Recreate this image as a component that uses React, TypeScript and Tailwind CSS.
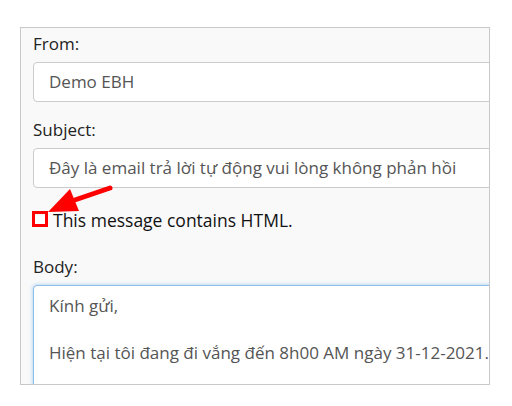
export default function App() {
  const font = { fontFamily: '"Open Sans", "Noto Sans", sans-serif' };
  return (
    <div className="relative w-[512px] h-[406px] bg-white pt-[27px] pl-[20px]" style={font}>
      <div className="w-[470px] h-[358px] border border-[#c8c8c8] bg-[#f9f9f9] overflow-hidden pl-[12px]">
        <div className="h-[22px] mt-[5px] text-[17px] leading-[22px] text-[#222]">From:</div>
        <div className="mt-[7px] w-[480px] h-[40px] rounded-[4px] border border-[#cccccc] bg-white pl-[15px] flex items-center text-[17px] text-[#555]">
          Demo EBH
        </div>
        <div className="h-[22px] mt-[17px] text-[17px] leading-[22px] text-[#222]">Subject:</div>
        <div className="mt-[7px] w-[480px] h-[40px] rounded-[4px] border border-[#cccccc] bg-white pl-[15px] flex items-center text-[17px] text-[#555]">
          Đây là email trả lời tự động vui lòng không phản hồi
        </div>
        <div className="mt-[22px] ml-[-1px] flex items-center h-[17px]">
          <div className="w-[16px] h-[16px] border-[3px] border-[#ff0000] bg-white shrink-0" />
          <span className="ml-[5px] mt-[3px] text-[17.5px] leading-[22px] text-[#111]">This message contains HTML.</span>
        </div>
        <div className="h-[22px] mt-[29px] text-[17px] leading-[22px] text-[#222]">Body:</div>
        <div className="mt-[7px] w-[480px] h-[120px] rounded-[4px] border border-[#8dbde9] bg-white pl-[15px] pt-[8px] text-[17px] leading-[23.5px] text-[#555] shadow-[0_0_4px_rgba(102,175,233,0.6)]">
          <div>Kính gửi,</div>
          <div>&nbsp;</div>
          <div className="whitespace-nowrap">
            Hiện tại tôi đang đi vắng đến 8h00 AM ngày 31-12-2021.<span className="ml-[3px] text-[#f0a040]">B</span>
          </div>
        </div>
      </div>
      <svg className="absolute left-0 top-0" width="512" height="406" viewBox="0 0 512 406">
        <line x1="110" y1="188" x2="66" y2="203" stroke="#ff0000" strokeWidth="5" strokeLinecap="round" />
        <polygon points="48,212 70,189 79,211" fill="#ff0000" />
      </svg>
    </div>
  );
}
